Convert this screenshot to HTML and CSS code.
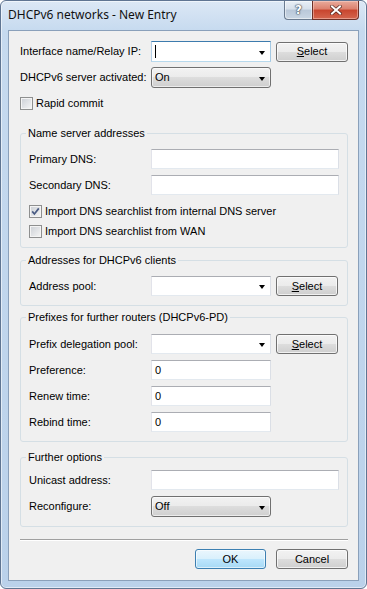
FILE: index.html
```html
<!DOCTYPE html>
<html>
<head>
<meta charset="utf-8">
<link rel="stylesheet" href="styles.css">
</head>
<body>
<div class="window">
  <div class="titlebar">
    <span class="title">DHCPv6 networks - New Entry</span>
    <div class="caption">
      <div class="cap-btn help"><span class="help-glyph">?</span></div>
      <div class="cap-btn close">
        <svg width="12" height="10" viewBox="0 0 12 10">
          <path d="M2 1.5 L10 8.5 M10 1.5 L2 8.5" stroke="#3a1a14" stroke-width="3.6" stroke-linecap="square" fill="none" opacity="0.75"/>
          <path d="M2 1.5 L10 8.5 M10 1.5 L2 8.5" stroke="#ffffff" stroke-width="2" stroke-linecap="square" fill="none"/>
        </svg>
      </div>
    </div>
  </div>
  <div class="client">
    <div class="row">
      <span class="lbl">Interface name/Relay IP:</span>
      <div class="combo edit focused"><span class="caret"></span><span class="arrow"></span></div>
      <button class="btn sel"><u>S</u>elect</button>
    </div>
    <div class="row mt-5">
      <span class="lbl">DHCPv6 server activated:</span>
      <div class="combo list"><span class="value">On</span><span class="arrow"></span></div>
    </div>
    <div class="check-row mt-9">
      <span class="checkbox"></span><span class="check-text">Rapid commit</span>
    </div>

    <div class="group mt-23">
      <span class="group-title">Name server addresses</span>
      <div class="row mt-9">
        <span class="lbl">Primary DNS:</span>
        <div class="field wide"></div>
      </div>
      <div class="row mt-6">
        <span class="lbl">Secondary DNS:</span>
        <div class="field wide"></div>
      </div>
      <div class="check-row mt-10">
        <span class="checkbox checked">
          <svg width="9" height="9" viewBox="0 0 9 9"><path d="M1.2 4.4 L3.4 7 L7.8 1.4" stroke="#4a5c84" stroke-width="1.7" fill="none"/></svg>
        </span><span class="check-text">Import DNS searchlist from internal DNS server</span>
      </div>
      <div class="check-row mt-7">
        <span class="checkbox"></span><span class="check-text">Import DNS searchlist from WAN</span>
      </div>
    </div>

    <div class="group mt-12">
      <span class="group-title">Addresses for DHCPv6 clients</span>
      <div class="row mt-9">
        <span class="lbl">Address pool:</span>
        <div class="combo edit"><span class="arrow"></span></div>
        <button class="btn sel small"><u>S</u>elect</button>
      </div>
    </div>

    <div class="group mt-11">
      <span class="group-title">Prefixes for further routers (DHCPv6-PD)</span>
      <div class="row mt-10">
        <span class="lbl">Prefix delegation pool:</span>
        <div class="combo edit"><span class="arrow"></span></div>
        <button class="btn sel small"><u>S</u>elect</button>
      </div>
      <div class="row mt-6">
        <span class="lbl">Preference:</span>
        <div class="field"><span class="value">0</span></div>
      </div>
      <div class="row mt-6">
        <span class="lbl">Renew time:</span>
        <div class="field"><span class="value">0</span></div>
      </div>
      <div class="row mt-6">
        <span class="lbl">Rebind time:</span>
        <div class="field"><span class="value">0</span></div>
      </div>
    </div>

    <div class="group mt-15">
      <span class="group-title">Further options</span>
      <div class="row mt-6">
        <span class="lbl">Unicast address:</span>
        <div class="field wide"></div>
      </div>
      <div class="row mt-6">
        <span class="lbl">Reconfigure:</span>
        <div class="combo list"><span class="value">Off</span><span class="arrow"></span></div>
      </div>
    </div>

    <div class="separator"></div>

    <div class="footer">
      <button class="btn default">OK</button>
      <button class="btn">Cancel</button>
    </div>
  </div>
</div>
</body>
</html>
```

FILE: styles.css
```css
* { box-sizing: border-box; }
html, body { margin: 0; padding: 0; }
body {
  width: 367px;
  height: 589px;
  overflow: hidden;
  background: #ffffff;
  font-family: "Liberation Sans", Arial, sans-serif;
  font-size: 11px;
  color: #000;
}

.window {
  width: 367px;
  height: 589px;
  border: 1px solid #5f7592;
  border-radius: 6px;
  background: linear-gradient(#dce8f5 0, #c6daef 30px, #bad1ea 100%);
  box-shadow: inset 0 0 0 1px rgba(255,255,255,0.55);
  padding: 0 7px 7px 7px;
  display: flex;
  flex-direction: column;
}

.titlebar {
  height: 29px;
  display: flex;
  justify-content: space-between;
  align-items: flex-start;
}
.title {
  font-family: "Noto Sans", "Open Sans", sans-serif;
  font-size: 12px;
  line-height: 16px;
  margin-top: 6px;
  color: #111;
}
.caption {
  display: flex;
  height: 19px;
}
.cap-btn {
  height: 19px;
  display: flex;
  align-items: center;
  justify-content: center;
}
.help {
  width: 28px;
  border: 1px solid #6a7b90;
  border-top: none;
  border-right: none;
  border-radius: 0 0 0 4px;
  background: linear-gradient(#e9eff6 0, #d6e0eb 45%, #b9c8d9 50%, #c9d6e4 100%);
  box-shadow: inset 0 0 0 1px rgba(255,255,255,0.5);
}
.help-glyph {
  font-family: "DejaVu Sans", sans-serif;
  font-weight: bold;
  font-size: 12px;
  line-height: 12px;
  color: #fff;
  text-shadow: 0 0 1px #3b4654, 0 0 1px #3b4654, 0 0 2px #3b4654;
}
.close {
  width: 47px;
  border: 1px solid #6e3027;
  border-top: none;
  border-radius: 0 0 4px 0;
  background: linear-gradient(#e9ab9c 0, #dc806d 45%, #c8452e 50%, #d4664e 100%);
  box-shadow: inset 0 0 0 1px rgba(255,220,210,0.45);
}

.client {
  flex: 1;
  border: 1px solid #8aa0ba;
  background: #f0f0f0;
  padding: 10px 10px 0 11px;
  display: flex;
  flex-direction: column;
}

.row {
  display: flex;
  align-items: center;
}
.lbl {
  width: 131px;
  flex: none;
  white-space: nowrap;
  line-height: 13px;
}
.group .lbl { width: 122px; }

.mt-5 { margin-top: 5px; }
.mt-6 { margin-top: 6px; }
.mt-7 { margin-top: 7px; }
.mt-9 { margin-top: 9px; }
.mt-10 { margin-top: 10px; }
.mt-11 { margin-top: 11px; }
.mt-12 { margin-top: 12px; }
.mt-15 { margin-top: 15px; }
.mt-23 { margin-top: 23px; }

.field {
  width: 120px;
  height: 20px;
  background: #fff;
  border: 1px solid;
  border-color: #abadb3 #dbdfe6 #e3e9ef #e2e3ea;
  display: flex;
  align-items: center;
  padding: 0 3px;
}
.field.wide { width: 188px; }

.combo {
  width: 120px;
  height: 21px;
  position: relative;
  display: flex;
  align-items: center;
  padding: 0 3px;
}
.combo.edit {
  background: #fff;
  border: 1px solid;
  border-color: #abadb3 #dbdfe6 #e3e9ef #e2e3ea;
  height: 20px;
}
.combo.edit.focused {
  border-color: #3d7bad #a4c9e3 #b7d9ed #b5cfe7;
  height: 21px;
}
.combo.list {
  border: 1px solid #707070;
  border-radius: 3px;
  background: linear-gradient(#f2f2f2 0, #ebebeb 50%, #dddddd 50%, #cfcfcf 100%);
  box-shadow: inset 0 0 0 1px rgba(255,255,255,0.6);
}
.caret {
  width: 1px;
  height: 13px;
  background: #000;
}
.arrow {
  position: absolute;
  right: 5px;
  top: 50%;
  margin-top: -1px;
  width: 0;
  height: 0;
  border-left: 3.5px solid transparent;
  border-right: 3.5px solid transparent;
  border-top: 4px solid #000;
}
.value { line-height: 13px; }

.btn {
  font-family: "Liberation Sans", Arial, sans-serif;
  font-size: 11px;
  color: #000;
  height: 20px;
  padding: 0;
  border: 1px solid #707070;
  border-radius: 3px;
  background: linear-gradient(#f2f2f2 0, #ebebeb 50%, #dddddd 50%, #cfcfcf 100%);
  box-shadow: inset 0 0 0 1px rgba(255,255,255,0.7);
  width: 72px;
  line-height: 17px;
}
.btn.sel { margin-left: 5px; }
.btn.small { width: 62px; }
.btn.default {
  border-color: #3c7fb1;
  background: linear-gradient(#eaf6fd 0, #d9f0fc 50%, #bee6fd 50%, #a7d9f5 100%);
  box-shadow: inset 0 0 0 1px rgba(255,255,255,0.6);
  width: 71px;
}

.check-row {
  display: flex;
  align-items: center;
  height: 13px;
}
.checkbox {
  width: 13px;
  height: 13px;
  border: 1px solid #8e8f8f;
  background: linear-gradient(135deg, #cbcfd5 0, #f6f6f6 100%);
  box-shadow: inset 0 0 0 1px #f4f4f4;
  display: flex;
  align-items: center;
  justify-content: center;
  flex: none;
}
.check-text {
  margin-left: 3px;
  line-height: 13px;
  white-space: nowrap;
}

.group {
  border: 1px solid #d5dfe5;
  border-radius: 3px;
  padding: 0 8px 9px 8px;
  display: flex;
  flex-direction: column;
}
.group-title {
  align-self: flex-start;
  margin: -7px 0 0 -3px;
  padding: 0 2px;
  background: #f0f0f0;
  line-height: 13px;
  height: 13px;
  white-space: nowrap;
}

.separator {
  margin-top: 12px;
  height: 2px;
  border-top: 1px solid #a0a0a0;
  border-bottom: 1px solid #ffffff;
}

.footer {
  margin-top: 8px;
  display: flex;
  justify-content: flex-end;
  gap: 10px;
}
```
